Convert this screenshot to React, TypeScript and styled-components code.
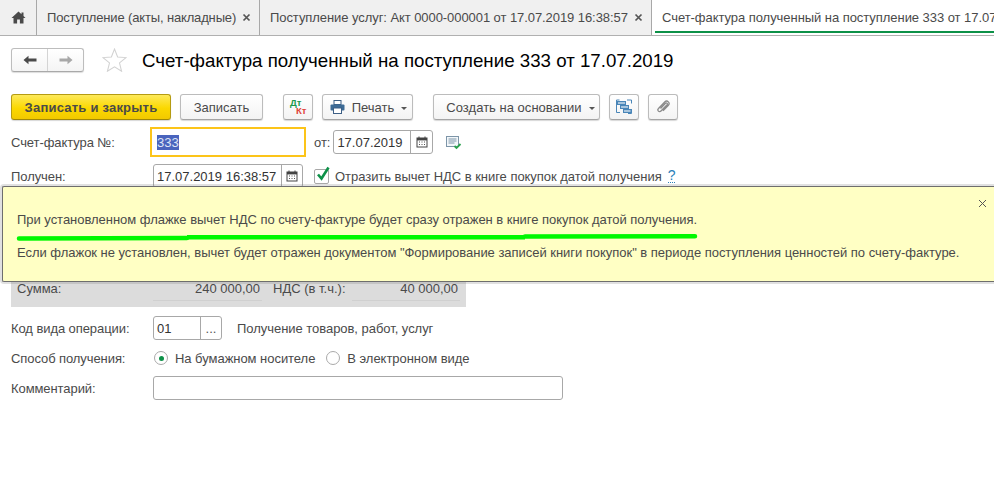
import React from "react";
import styled, { createGlobalStyle } from "styled-components";

const Global = createGlobalStyle`
  html, body { margin: 0; padding: 0; background: #fff; }
  body { font-family: "Liberation Sans", Arial, sans-serif; font-size: 13px; color: #4a4a4a; }
  #root { width: 994px; height: 489px; overflow: hidden; position: relative; }
`;

const Page = styled.div`
  width: 994px;
  height: 489px;
  position: relative;
  overflow: hidden;
  background: #fff;
`;

const TabBar = styled.div`
  display: flex;
  height: 35px;
  background: #f0f0f0;
  border-bottom: 1px solid #b0b0b0;
  overflow: hidden;
`;
const HomeTab = styled.div`
  width: 36px;
  flex: none;
  display: flex;
  align-items: center;
  justify-content: center;
  border-right: 1px solid #a8a8a8;
`;
const Tab = styled.div<{ $w: number; $ls?: number; $active?: boolean }>`
  width: ${(p) => p.$w}px;
  flex: none;
  box-sizing: border-box;
  display: flex;
  align-items: center;
  padding-left: 10px;
  white-space: nowrap;
  overflow: hidden;
  position: relative;
  border-right: ${(p) => (p.$active ? "none" : "1px solid #a8a8a8")};
  background: ${(p) => (p.$active ? "#fff" : "transparent")};
  color: #4a4a4a;
  font-size: 13px;
  letter-spacing: ${(p) => p.$ls ?? -0.05}px;
`;
const ActiveLine = styled.div`
  position: absolute;
  left: 3px;
  right: 0;
  bottom: 2px;
  height: 2px;
  background: #0d9148;
`;
const TabClose = styled.span`
  margin-left: 6px;
  display: inline-flex;
`;

const TitleRow = styled.div`
  display: flex;
  align-items: center;
  height: 24px;
  margin: 12px 0 0 11px;
`;
const NavGroup = styled.div`
  display: flex;
  width: 73px;
  height: 24px;
  box-sizing: border-box;
  border: 1px solid #bdbdbd;
  border-bottom-color: #a9a9a9;
  border-radius: 3px;
  background: linear-gradient(#fff, #f4f4f4);
  box-shadow: 0 1px 1px #ddd;
`;
const NavCell = styled.div<{ $divider?: boolean }>`
  flex: 1;
  display: flex;
  align-items: center;
  justify-content: center;
  ${(p) => (p.$divider ? "border-left: 1px solid #d4d4d4;" : "")}
`;
const StarBox = styled.div`
  margin-left: 18px;
  width: 25px;
  height: 24px;
  display: flex;
  align-items: center;
  justify-content: center;
`;
const Title = styled.h1`
  margin: 2px 0 0 15px;
  font-size: 18.72px;
  font-weight: 400;
  color: #000;
  white-space: nowrap;
`;

const Toolbar = styled.div`
  display: flex;
  align-items: flex-start;
  margin: 22px 0 0 11px;
  height: 26px;
`;
const Btn = styled.div<{ $w: number; $ml?: number; $pl?: number; $primary?: boolean }>`
  width: ${(p) => p.$w}px;
  height: 26px;
  margin-left: ${(p) => p.$ml ?? 0}px;
  padding-left: ${(p) => p.$pl ?? 0}px;
  flex: none;
  box-sizing: border-box;
  display: flex;
  align-items: center;
  justify-content: center;
  gap: 6px;
  border-radius: 3px;
  border: 1px solid ${(p) => (p.$primary ? "#b59b12" : "#bcbcbc")};
  border-bottom-color: ${(p) => (p.$primary ? "#a08808" : "#a4a4a4")};
  background: ${(p) => (p.$primary ? "linear-gradient(#fde95a, #fbd800 55%, #f2c900)" : "linear-gradient(#fff, #f3f3f3)")};
  color: #4a4a4a;
  font-size: 13px;
  font-weight: ${(p) => (p.$primary ? 700 : 400)};
  letter-spacing: ${(p) => (p.$primary ? 0.22 : 0.02)}px;
  white-space: nowrap;
  box-shadow: 0 1px 1px #d8d8d8;
`;
const PrintIcon = styled.svg`
  margin-right: 1px;
`;
const Caret = styled.span`
  width: 0;
  height: 0;
  margin-left: 1px;
  margin-top: 2px;
  border-left: 3.5px solid transparent;
  border-right: 3.5px solid transparent;
  border-top: 3px solid #555;
`;
const DtKt = styled.div`
  width: 22px;
  height: 20px;
  position: relative;
  font-weight: 700;
  font-size: 9.5px;
  line-height: 8px;
  letter-spacing: 0;
`;
const Dt = styled.span`
  position: absolute;
  left: 3px;
  top: 2px;
  color: #1c9a4c;
`;
const Kt = styled.span`
  position: absolute;
  left: 9px;
  top: 10px;
  color: #e0453a;
`;

const Form = styled.div`
  margin: 7px 0 0 11px;
  display: flex;
  flex-direction: column;
`;
const Row = styled.div<{ $h: number; $mt?: number }>`
  display: flex;
  align-items: center;
  height: ${(p) => p.$h}px;
  margin-top: ${(p) => p.$mt ?? 0}px;
  white-space: nowrap;
`;
const Label = styled.div`
  width: 142px;
  flex: none;
  letter-spacing: -0.08px;
`;
const FocusField = styled.div`
  width: 156px;
  height: 30px;
  box-sizing: border-box;
  margin-left: -3px;
  border: 2px solid #fcc419;
  padding-left: 5px;
  display: flex;
  align-items: center;
  color: #333;
`;
const Selected = styled.span`
  background: #4a64bd;
  color: #dfe4f5;
`;
const Field = styled.div<{ $w: number; $ml?: number }>`
  width: ${(p) => p.$w}px;
  height: 24px;
  margin-left: ${(p) => p.$ml ?? 0}px;
  flex: none;
  box-sizing: border-box;
  border: 1px solid #a8a8a8;
  border-radius: 3px;
  background: #fff;
  display: flex;
  align-items: center;
  color: #333;
  overflow: hidden;
`;
const FieldText = styled.div`
  flex: 1;
  padding-left: 3px;
`;
const FieldBtn = styled.div<{ $w: number }>`
  width: ${(p) => p.$w}px;
  height: 100%;
  flex: none;
  border-left: 1px solid #a8a8a8;
  display: flex;
  align-items: center;
  justify-content: center;
  color: #555;
`;
const NoteIcon = styled.svg`
  margin: 2px 0 0 13px;
`;
const InlineText = styled.span<{ $ml?: number }>`
  margin-left: ${(p) => p.$ml ?? 0}px;
  letter-spacing: -0.04px;
`;
const CheckBox = styled.span`
  width: 15px;
  height: 15px;
  margin-left: 11px;
  box-sizing: border-box;
  border: 1px solid #a8a8a8;
  border-radius: 2px;
  position: relative;
  flex: none;
`;
const CheckMark = styled.svg`
  position: absolute;
  left: 0;
  top: -5px;
`;
const Help = styled.span`
  margin-left: 6px;
  color: #2a7fb8;
  border-bottom: 1px dotted #2a7fb8;
  line-height: 13px;
  font-size: 14px;
`;
const SumPanel = styled.div`
  width: 455px;
  height: 116px;
  margin-top: 3px;
  background: #dcdcdc;
  display: flex;
  align-items: flex-end;
  padding: 0 0 6px 6px;
  box-sizing: border-box;
`;
const SumLabel = styled.div<{ $w: number; $ml?: number }>`
  width: ${(p) => p.$w}px;
  margin-left: ${(p) => p.$ml ?? 0}px;
  height: 24px;
  line-height: 24px;
  flex: none;
`;
const SumValue = styled.div<{ $w: number }>`
  width: ${(p) => p.$w}px;
  height: 24px;
  line-height: 24px;
  padding-right: 2px;
  box-sizing: border-box;
  flex: none;
  text-align: right;
  border-bottom: 1px solid #d0d0d0;
`;
const Radio = styled.span<{ $on?: boolean; $ml?: number }>`
  width: 14px;
  height: 14px;
  margin-left: ${(p) => p.$ml ?? 0}px;
  flex: none;
  box-sizing: border-box;
  border: 1px solid #aaa;
  border-radius: 50%;
  display: flex;
  align-items: center;
  justify-content: center;
  &::after {
    content: "";
    display: ${(p) => (p.$on ? "block" : "none")};
    width: 5px;
    height: 5px;
    border-radius: 50%;
    background: #0d9148;
  }
`;

const Tip = styled.div`
  position: absolute;
  left: 2px;
  top: 186px;
  width: 992px;
  height: 96px;
  box-sizing: border-box;
  background: #ffffc4;
  border: 1px solid #6e6e6e;
  border-right: none;
  border-radius: 2px 0 0 2px;
  box-shadow: 0 0 0 2px rgba(120, 120, 120, 0.22);
  padding: 26px 0 0 14px;
  color: #4a4a4a;
  letter-spacing: -0.03px;
`;
const TipLine = styled.div<{ $mt?: number }>`
  line-height: 14px;
  margin-top: ${(p) => p.$mt ?? 0}px;
  white-space: nowrap;
`;
const TipClose = styled.svg`
  position: absolute;
  right: 7px;
  top: 12px;
`;
const Underline = styled.svg`
  position: absolute;
  left: 0;
  top: 233px;
`;

const Calendar = () => (
  <svg width="12" height="12" viewBox="0 0 12 12">
    <rect x="1" y="2" width="10" height="9" fill="none" stroke="#444" />
    <rect x="1" y="2" width="10" height="2.4" fill="#444" />
    <path d="M3 0.5v2M9 0.5v2" stroke="#444" />
    <path d="M3 6h1M5.5 6h1M8 6h1M3 8.5h1M5.5 8.5h1M8 8.5h1" stroke="#555" />
  </svg>
);
const SmallX = () => (
  <svg width="9" height="9" viewBox="0 0 9 9">
    <path d="M1.5 1.5l6 6M7.5 1.5l-6 6" stroke="#555" strokeWidth="1.7" />
  </svg>
);

export default function App() {
  return (
    <Page>
      <Global />
      <TabBar>
        <HomeTab>
          <svg width="15" height="13" viewBox="0 0 15 13">
            <path d="M7.5 0.5L0.5 7h2v5.500h3.600V8.600h2.800v3.900h3.600V7h2l-2-1.900V1.500h-2v1.700z" fill="#4a4a4a" />
          </svg>
        </HomeTab>
        <Tab $w={223} $ls={-0.15}>
          Поступление (акты, накладные)
          <TabClose><SmallX /></TabClose>
        </Tab>
        <Tab $w={392} $ls={-0.07}>
          Поступление услуг: Акт 0000-000001 от 17.07.2019 16:38:57
          <TabClose><SmallX /></TabClose>
        </Tab>
        <Tab $w={342} $active>
          Счет-фактура полученный на поступление 333 от 17.07.2019
          <ActiveLine />
        </Tab>
      </TabBar>

      <TitleRow>
        <NavGroup>
          <NavCell>
            <svg width="14" height="10" viewBox="0 0 14 10"><path d="M0.500 5L5.500 0.800V3.600H13.500V6.400H5.500V9.200z" fill="#4a4a4a" /></svg>
          </NavCell>
          <NavCell $divider>
            <svg width="14" height="10" viewBox="0 0 14 10"><path d="M13.500 5L8.500 0.800V3.600H0.500V6.400H8.500V9.200z" fill="#a8a8a8" /></svg>
          </NavCell>
        </NavGroup>
        <StarBox>
          <svg width="25" height="24" viewBox="0 0 24 23"><path d="M12 1l3 7.600 8 .6-6.200 5.100 2 8-6.800-4.300-6.800 4.300 2-8L1 9.200l8-.6z" fill="none" stroke="#d2d2d2" /></svg>
        </StarBox>
        <Title>Счет-фактура полученный на поступление 333 от 17.07.2019</Title>
      </TitleRow>

      <Toolbar>
        <Btn $w={160} $primary>Записать и закрыть</Btn>
        <Btn $w={83} $ml={9}>Записать</Btn>
        <Btn $w={30} $ml={20}>
          <DtKt><Dt>Дт</Dt><Kt>Кт</Kt></DtKt>
        </Btn>
        <Btn $w={91} $ml={9} $pl={2}>
          <PrintIcon width="15" height="14" viewBox="0 0 15 14">
            <rect x="4" y="0.500" width="7" height="4" fill="#fff" stroke="#3d5f85" />
            <rect x="0.500" y="4.500" width="14" height="6" rx="1" fill="#3d6b96" />
            <rect x="3.500" y="8" width="8" height="5.500" fill="#fff" stroke="#3d5f85" />
          </PrintIcon>
          <span>Печать</span>
          <Caret />
        </Btn>
        <Btn $w={167} $ml={20} $pl={8}>
          <span>Создать на основании</span>
          <Caret />
        </Btn>
        <Btn $w={30} $ml={9}>
          <svg width="16" height="16" viewBox="0 0 16 16">
            <path d="M3.500 1H.5v12.500h3.500M11 1h4.500v3.500M15.500 10v4.500H12" fill="none" stroke="#4a86b8" />
            <rect x="1.500" y="2.500" width="8" height="3" fill="#a9c6de" stroke="#4a86b8" />
            <rect x="4.500" y="6.500" width="8" height="3" fill="#a9c6de" stroke="#4a86b8" />
            <rect x="7.500" y="10.500" width="7.500" height="3" fill="#a9c6de" stroke="#4a86b8" />
          </svg>
        </Btn>
        <Btn $w={30} $ml={9}>
          <svg width="14" height="14" viewBox="0 0 14 14">
            <path d="M4.500 8.500L9.500 3.200c1-1 2.600.5 1.600 1.600L5 11c-1.800 1.800-4.300-.7-2.500-2.500L8.700 2c2.500-2.500 6 1 3.500 3.500L7 10.800" fill="none" stroke="#8a8a8a" strokeWidth="1.300" />
          </svg>
        </Btn>
      </Toolbar>

      <Form>
        <Row $h={30}>
          <Label>Счет-фактура №:</Label>
          <FocusField><Selected>333</Selected></FocusField>
          <InlineText $ml={8}>от:</InlineText>
          <Field $w={100} $ml={3}>
            <FieldText>17.07.2019</FieldText>
            <FieldBtn $w={21}><Calendar /></FieldBtn>
          </Field>
          <NoteIcon width="16" height="14" viewBox="0 0 16 14">
            <rect x="0.500" y="0.500" width="12" height="10" fill="#f3f7fa" stroke="#7d95a8" />
            <path d="M2.500 3h8M2.500 5h8M2.500 7h6" stroke="#7d95a8" />
            <path d="M8.500 10l2 2 4-4" fill="none" stroke="#2ca24f" strokeWidth="1.800" />
          </NoteIcon>
        </Row>
        <Row $h={24} $mt={7}>
          <Label>Получен:</Label>
          <Field $w={150}>
            <FieldText>17.07.2019 16:38:57</FieldText>
            <FieldBtn $w={20}><Calendar /></FieldBtn>
          </Field>
          <CheckBox>
            <CheckMark width="17" height="18" viewBox="0 0 17 18"><path d="M3 9.500l3.500 4 7-11" fill="none" stroke="#0d9148" strokeWidth="2.600" /></CheckMark>
          </CheckBox>
          <InlineText $ml={6}>Отразить вычет НДС в книге покупок датой получения</InlineText>
          <Help>?</Help>
        </Row>
        <SumPanel>
          <SumLabel $w={136}>Сумма:</SumLabel>
          <SumValue $w={109}>240 000,00</SumValue>
          <SumLabel $w={79} $ml={11}>НДС (в т.ч.):</SumLabel>
          <SumValue $w={108}>40 000,00</SumValue>
        </SumPanel>
        <Row $h={24} $mt={9}>
          <Label>Код вида операции:</Label>
          <Field $w={69}>
            <FieldText>01</FieldText>
            <FieldBtn $w={20}>...</FieldBtn>
          </Field>
          <InlineText $ml={15}>Получение товаров, работ, услуг</InlineText>
        </Row>
        <Row $h={24} $mt={6}>
          <Label>Способ получения:</Label>
          <Radio $on $ml={1} />
          <InlineText $ml={7}>На бумажном носителе</InlineText>
          <Radio $ml={11} />
          <InlineText $ml={7}>В электронном виде</InlineText>
        </Row>
        <Row $h={24} $mt={6}>
          <Label>Комментарий:</Label>
          <Field $w={410} />
        </Row>
      </Form>

      <Tip>
        <TipLine>При установленном флажке вычет НДС по счету-фактуре будет сразу отражен в книге покупок датой получения.</TipLine>
        <TipLine $mt={19}>Если флажок не установлен, вычет будет отражен документом "Формирование записей книги покупок" в периоде поступления ценностей по счету-фактуре.</TipLine>
        <TipClose width="9" height="9" viewBox="0 0 9 9"><path d="M1 1l7 7M8 1l-7 7" stroke="#555" /></TipClose>
      </Tip>
      <Underline width="700" height="10" viewBox="0 0 700 10">
        <path d="M19 5.500L187 5" stroke="#00f800" strokeWidth="4.500" strokeLinecap="round" />
        <path d="M187 4.300L525 4.300" stroke="#00f800" strokeWidth="4.500" />
        <path d="M525 3.500L695 3.200" stroke="#00f800" strokeWidth="4.500" strokeLinecap="round" />
      </Underline>
    </Page>
  );
}
